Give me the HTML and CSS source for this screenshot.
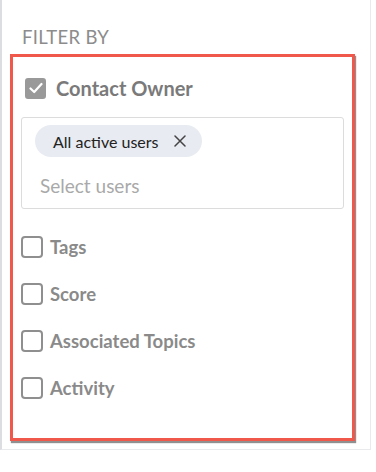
FILE: index.html
```html
<!DOCTYPE html>
<html lang="en">

<head>
    <meta charset="UTF-8">
    <meta name="viewport" content="width=device-width, initial-scale=1.0">
    <title>Filter By</title>
    <link rel="stylesheet" href="styles.css">
</head>

<body>
    <div class="panel">
        <div class="panel-title">FILTER BY</div>

        <div class="filter-box">
            <div class="owner-row">
                <span class="check checked">
                    <svg width="14" height="12" viewBox="0 0 14 12">
                        <path d="M1.5 6.5 L5.2 10 L12.5 2" fill="none" stroke="#fff" stroke-width="2.2" stroke-linecap="round" stroke-linejoin="round"/>
                    </svg>
                </span>
                <span class="owner-label">Contact Owner</span>
            </div>

            <div class="user-select">
                <div class="chip">
                    <span>All active users</span>
                    <svg class="chip-close" width="12" height="12" viewBox="0 0 12 12">
                        <path d="M1 1 L11 11 M11 1 L1 11" stroke="#444" stroke-width="1.5" stroke-linecap="round"/>
                    </svg>
                </div>
                <div class="placeholder">Select users</div>
            </div>

            <div class="option"><span class="check"></span><span class="option-label">Tags</span></div>
            <div class="option"><span class="check"></span><span class="option-label">Score</span></div>
            <div class="option"><span class="check"></span><span class="option-label">Associated Topics</span></div>
            <div class="option"><span class="check"></span><span class="option-label">Activity</span></div>
        </div>
    </div>
</body>

</html>
```

FILE: styles.css
```css
body {
    margin: 0;
    font-family: Lato, "Open Sans", sans-serif;
    background: #fff;
}

.panel {
    width: 371px;
    height: 450px;
    box-sizing: border-box;
    border-left: 2px solid #dcdde1;
    border-right: 1px solid #e9eaec;
    border-bottom: 1px solid #e9eaec;
    padding-top: 26px;
}

.panel-title {
    margin-left: 20px;
    font-size: 18.5px;
    color: #8c8c8c;
    letter-spacing: 0.3px;
    line-height: 22px;
}

.filter-box {
    margin-top: 6px;
    margin-left: 8px;
    width: 345px;
    height: 387px;
    box-sizing: border-box;
    border: 3px solid #f0584c;
    box-shadow: 1px 2px 1px rgba(70, 70, 70, 0.6);
    padding: 20px 8px 0 8px;
}

.owner-row {
    display: flex;
    align-items: center;
    margin-left: 4px;
    height: 22px;
}

.check {
    width: 21px;
    height: 21px;
    box-sizing: border-box;
    border: 2px solid #8f8f8f;
    border-radius: 4px;
    display: flex;
    align-items: center;
    justify-content: center;
    flex-shrink: 0;
}

.check.checked {
    background: #999;
    border-color: #999;
    border-radius: 3px;
}

.owner-label {
    margin-left: 10px;
    font-size: 20px;
    font-weight: bold;
    color: #7a7a7a;
    line-height: 22px;
}

.user-select {
    margin-top: 18px;
    height: 92px;
    box-sizing: border-box;
    border: 1px solid #dcdcdc;
    border-radius: 3px;
    padding: 7px 13px 0 13px;
}

.chip {
    display: inline-flex;
    align-items: center;
    height: 32px;
    padding: 0 16px 0 18px;
    border-radius: 16px;
    background: #e8ebf1;
    font-size: 16px;
    color: #222;
}

.chip-close {
    margin-left: 16px;
}

.placeholder {
    margin-top: 17px;
    margin-left: 5px;
    font-size: 19px;
    line-height: 24px;
    color: #a9a9a9;
}

.option {
    display: flex;
    align-items: center;
    height: 22px;
    margin-top: 25px;
}

.user-select + .option {
    margin-top: 27px;
}

.option .check {
    width: 22px;
    height: 22px;
}

.option-label {
    margin-left: 7px;
    font-size: 18.5px;
    font-weight: bold;
    color: #8a8a8a;
    line-height: 22px;
}
```
